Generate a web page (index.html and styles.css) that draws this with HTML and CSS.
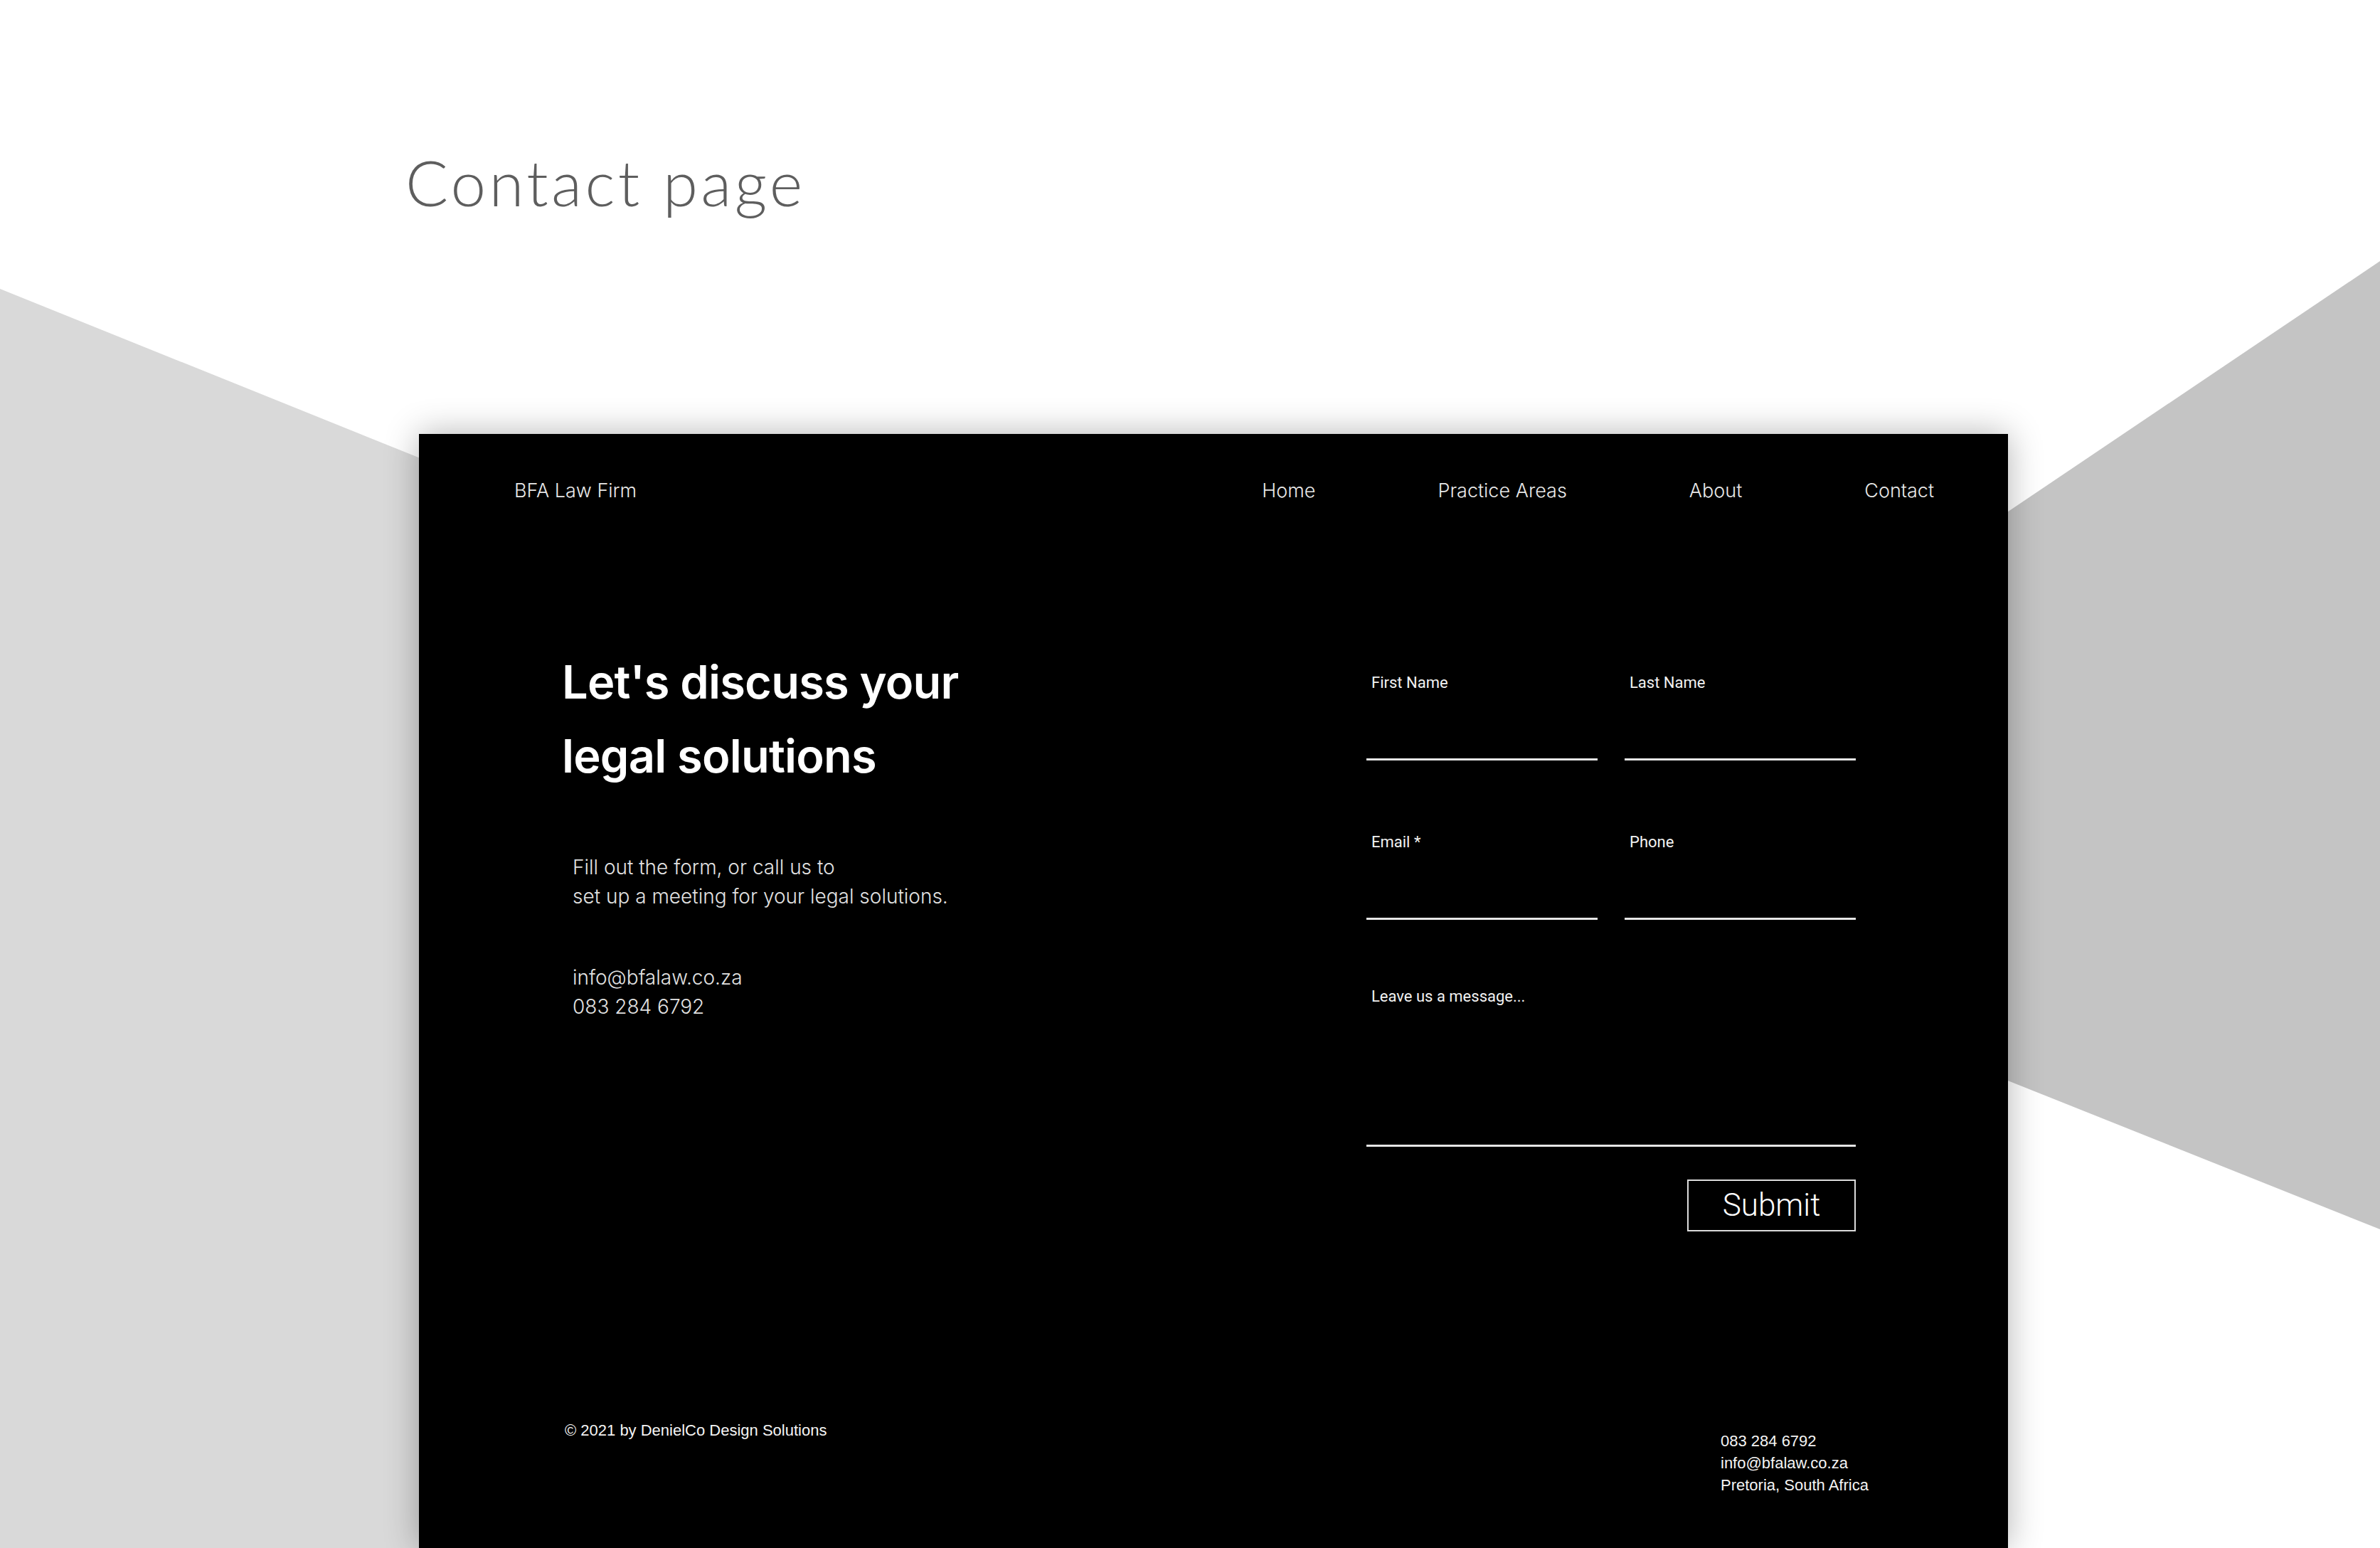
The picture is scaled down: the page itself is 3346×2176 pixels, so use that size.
FILE: index.html
```html
<!DOCTYPE html>
<html lang="en">
<head>
    <meta charset="UTF-8">
    <meta name="viewport" content="width=device-width, initial-scale=1.0">
    <title>Contact page</title>
    <link rel="stylesheet" href="styles.css">
</head>
<body>
    <svg class="backdrop" viewBox="0 0 3346 2176" preserveAspectRatio="none">
        <polygon class="wedge-left" points="0,406 700,688 700,2176 0,2176"/>
        <polygon class="wedge-right" points="2700,802 3346,367 3346,1728 2700,1470"/>
    </svg>

    <div class="page">
        <h1 class="page-title">Contact page</h1>

        <div class="site">
            <header class="site-header">
                <div class="logo">BFA Law Firm</div>
                <nav class="site-nav">
                    <a href="#">Home</a>
                    <a href="#">Practice Areas</a>
                    <a href="#">About</a>
                    <a href="#">Contact</a>
                </nav>
            </header>

            <main class="contact">
                <section class="intro">
                    <h2>Let's discuss your<br>legal solutions</h2>
                    <p class="intro-text">Fill out the form, or call us to<br>set up a meeting for your legal solutions.</p>
                    <p class="intro-contact">info@bfalaw.co.za<br>083 284 6792</p>
                </section>

                <form class="contact-form" onsubmit="return false">
                    <div class="form-grid">
                        <label class="field">
                            <span class="field-label">First Name</span>
                            <input type="text">
                        </label>
                        <label class="field">
                            <span class="field-label">Last Name</span>
                            <input type="text">
                        </label>
                        <label class="field">
                            <span class="field-label">Email *</span>
                            <input type="email">
                        </label>
                        <label class="field">
                            <span class="field-label">Phone</span>
                            <input type="tel">
                        </label>
                    </div>
                    <label class="field field-message">
                        <textarea placeholder="Leave us a message..."></textarea>
                    </label>
                    <div class="form-actions">
                        <button class="submit-button" type="submit">Submit</button>
                    </div>
                </form>
            </main>

            <footer class="site-footer">
                <div class="copyright">© 2021 by DenielCo Design Solutions</div>
                <div class="footer-contact">
                    083 284 6792<br>
                    info@bfalaw.co.za<br>
                    Pretoria, South Africa
                </div>
            </footer>
        </div>
    </div>
</body>
</html>
```

FILE: styles.css
```css
body {
    margin: 0;
    width: 3346px;
    height: 2176px;
    overflow: hidden;
    position: relative;
    background-color: #fff;
    font-family: Inter, "Open Sans", sans-serif;
}
.backdrop {
    position: absolute;
    top: 0;
    left: 0;
    width: 3346px;
    height: 2176px;
    z-index: 0;
}
.wedge-left {
    fill: #d9d9d9;
}
.wedge-right {
    fill: #c4c4c4;
}
.page {
    position: relative;
    z-index: 1;
}
.page-title {
    margin: 0 0 300px 570px;
    padding-top: 203px;
    font-family: Lato, "Open Sans", sans-serif;
    font-weight: 300;
    font-size: 89px;
    line-height: 1.2;
    letter-spacing: 4.3px;
    color: #5e5e5e;
}
.site {
    width: 2234px;
    height: 1566px;
    margin-left: 589px;
    background-color: #000;
    box-shadow: 0 0 45px rgba(0,0,0,0.3);
    color: #fff;
}
.site-header {
    height: 160px;
    display: flex;
    align-items: center;
    justify-content: space-between;
    padding: 0 104px 0 134px;
    font-weight: 300;
    font-size: 27px;
    color: #e8e8e8;
}
.site-nav {
    display: flex;
    gap: 172px;
}
.site-nav a {
    color: #e8e8e8;
    text-decoration: none;
}
.contact {
    display: flex;
    justify-content: space-between;
    align-items: flex-start;
    padding: 137px 214px 0 201px;
}
.intro h2 {
    margin: 0;
    font-weight: 600;
    font-size: 65px;
    line-height: 104px;
    letter-spacing: -0.8px;
    color: #fff;
}
.intro-text {
    margin: 84px 0 0 15px;
    font-weight: 300;
    font-size: 28px;
    line-height: 41px;
    color: #e2e2e2;
}
.intro-contact {
    margin: 73px 0 0 15px;
    font-weight: 300;
    font-size: 28px;
    line-height: 41px;
    color: #e2e2e2;
}
.contact-form {
    width: 688px;
    margin-top: 40px;
}
.form-grid {
    display: grid;
    grid-template-columns: 325px 325px;
    column-gap: 38px;
    row-gap: 102px;
}
.field {
    display: flex;
    flex-direction: column;
    box-sizing: border-box;
    height: 122px;
    border-bottom: 3px solid #e6e6e6;
}
.field-label,
.field textarea {
    font-family: Roboto, "Liberation Sans", sans-serif;
    font-size: 22px;
    line-height: 26px;
    color: #f2f2f2;
    padding-left: 7px;
}
.field input {
    flex: 1;
    background: transparent;
    border: none;
    outline: none;
    color: #fff;
}
.field-message {
    margin-top: 93px;
    height: 226px;
}
.field textarea {
    flex: 1;
    margin: 0;
    background: transparent;
    border: none;
    outline: none;
    resize: none;
}
.field textarea::placeholder {
    color: #f2f2f2;
    opacity: 1;
}
.form-actions {
    display: flex;
    justify-content: flex-end;
    margin-top: 46px;
}
.submit-button {
    width: 237px;
    height: 73px;
    padding: 0;
    background: transparent;
    border: 2px solid #dcdcdc;
    color: #fff;
    font-family: Roboto, "Liberation Sans", sans-serif;
    font-weight: 300;
    font-size: 44px;
    line-height: 1;
    cursor: pointer;
}
.site-footer {
    display: flex;
    justify-content: space-between;
    align-items: flex-start;
    margin-top: 265px;
    padding: 0 184px 0 205px;
    font-family: "Liberation Sans", Arial, sans-serif;
    color: #f4f4f4;
}
.copyright {
    font-size: 22px;
    line-height: 30px;
}
.footer-contact {
    width: 220px;
    margin-top: 14px;
    font-size: 22px;
    line-height: 31px;
}
```
